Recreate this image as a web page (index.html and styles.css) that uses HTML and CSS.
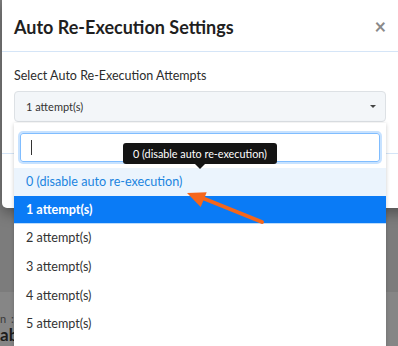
FILE: index.html
```html
<!DOCTYPE html>
<html>
<head>
<meta charset="utf-8">
<link rel="stylesheet" href="styles.css">
</head>
<body>
<div class="modal">
  <div class="modal-header">
    <h4 class="modal-title">Auto Re-Execution Settings</h4>
    <span class="close">&times;</span>
  </div>
  <div class="modal-body">
    <div class="label">Select Auto Re-Execution Attempts</div>
    <div class="select-wrap">
      <div class="select">
        <span class="select-text">1 attempt(s)</span>
        <span class="caret"></span>
      </div>
      <div class="dropdown">
        <div class="search"><div class="search-input"><span class="cursor"></span></div></div>
        <ul class="options">
          <li class="opt hover">0 (disable auto re-execution)</li>
          <li class="opt selected">1 attempt(s)</li>
          <li class="opt">2 attempt(s)</li>
          <li class="opt">3 attempt(s)</li>
          <li class="opt">4 attempt(s)</li>
          <li class="opt">5 attempt(s)</li>
        </ul>
        <div class="tooltip">0 (disable auto re-execution)</div>
        <svg class="pointer" width="372" height="120" viewBox="0 0 372 120">
          <line x1="248" y1="99" x2="186" y2="74" stroke="#f5661b" stroke-width="4" stroke-linecap="round"/>
          <polygon points="173,70 192.7,69.3 186.7,84.1" fill="#f5661b"/>
        </svg>
      </div>
    </div>
  </div>
  <div class="modal-footer"></div>
</div>
<div class="page-gap"></div>
<div class="page-peek">
  <div class="peek-small">n :</div>
  <div class="peek-big">ab</div>
</div>
</body>
</html>
```

FILE: styles.css
```css
html, body {
  margin: 0;
  padding: 0;
}
body {
  background: #7c7c7c;
  overflow: hidden;
  width: 398px;
  height: 346px;
  font-family: Lato, "Open Sans", sans-serif;
  color: #333;
}
.modal {
  margin-left: 2px;
  width: 430px;
  background: #fff;
  border-radius: 0 0 5px 5px;
  box-shadow: 0 5px 14px rgba(0, 0, 0, 0.35);
  position: relative;
  z-index: 2;
}
.modal-header {
  height: 52px;
  box-sizing: border-box;
  border-bottom: 1px solid #d5e5f7;
  display: flex;
  align-items: center;
  padding: 2px 12px 0 12px;
  width: 396px;
  justify-content: space-between;
}
.modal-title {
  margin: 0;
  font-size: 18px;
  font-weight: 700;
  color: #1f1f1f;
}
.close {
  font-size: 20px;
  font-weight: 700;
  color: #8a8a8a;
  line-height: 1;
  margin-top: -1px;
}
.modal-body {
  padding: 15px 12px 31px 12px;
  width: 372px;
}
.label {
  font-size: 12.5px;
  line-height: 17px;
  color: #2c2c2c;
  margin-bottom: 7px;
}
.select-wrap {
  position: relative;
}
.select {
  height: 31px;
  box-sizing: border-box;
  border: 1px solid #dde1e5;
  border-radius: 4px;
  background: #f3f6f9;
  display: flex;
  align-items: center;
  justify-content: space-between;
  padding: 0 9px 0 11px;
}
.select-text {
  font-size: 11px;
  color: #333;
}
.caret {
  width: 0;
  height: 0;
  border-left: 3px solid transparent;
  border-right: 3px solid transparent;
  border-top: 3px solid #444;
}
.dropdown {
  position: absolute;
  left: 0;
  top: 32px;
  width: 372px;
  background: #fff;
  box-shadow: 0 1px 4px rgba(0, 0, 0, 0.2);
  border-radius: 0 0 4px 4px;
}
.search {
  padding: 10px 6px 6px 6px;
}
.search-input {
  height: 29px;
  box-sizing: border-box;
  border: 1px solid #80bdff;
  border-radius: 3px;
  box-shadow: 0 0 0 2px rgba(0, 123, 255, 0.22);
  display: flex;
  align-items: center;
  padding-left: 10px;
}
.cursor {
  width: 1px;
  height: 15px;
  background: #333;
}
.options {
  list-style: none;
  margin: 0;
  padding: 0;
  height: 184px;
  overflow: hidden;
}
.opt {
  height: 28.8px;
  line-height: 28.8px;
  padding-left: 12px;
  font-size: 12.6px;
  color: #333;
}
.opt.hover {
  background: #ebf4fd;
  color: #1b84e0;
  height: 28px;
  line-height: 28px;
}
.opt.selected {
  background: #0a7bf6;
  color: #fff;
  font-weight: 700;
  border-bottom: 1px solid #bcdcfb;
  height: 27px;
  line-height: 28px;
}
.tooltip {
  position: absolute;
  left: 109px;
  top: 20px;
  width: 154px;
  height: 21px;
  box-sizing: border-box;
  background: #141414;
  color: #fff;
  font-size: 10.8px;
  line-height: 21px;
  text-align: center;
  border-radius: 3px;
}
.tooltip::after {
  content: "";
  position: absolute;
  left: 72px;
  bottom: -5px;
  border-left: 5px solid transparent;
  border-right: 5px solid transparent;
  border-top: 5px solid #141414;
}
.pointer {
  position: absolute;
  left: 0;
  top: 0;
  pointer-events: none;
}
.modal-footer {
  border-top: 1px solid #d5e5f7;
  height: 54px;
}
.page-gap {
  height: 84px;
}
.page-peek {
  background: #868686;
  height: 54px;
  padding-top: 20px;
  box-sizing: border-box;
}
.peek-small {
  font-size: 11px;
  color: #3a3a3a;
  line-height: 14px;
  letter-spacing: 1px;
}
.peek-big {
  font-size: 17px;
  font-weight: 700;
  color: #1d1d1d;
  line-height: 18px;
}
```
